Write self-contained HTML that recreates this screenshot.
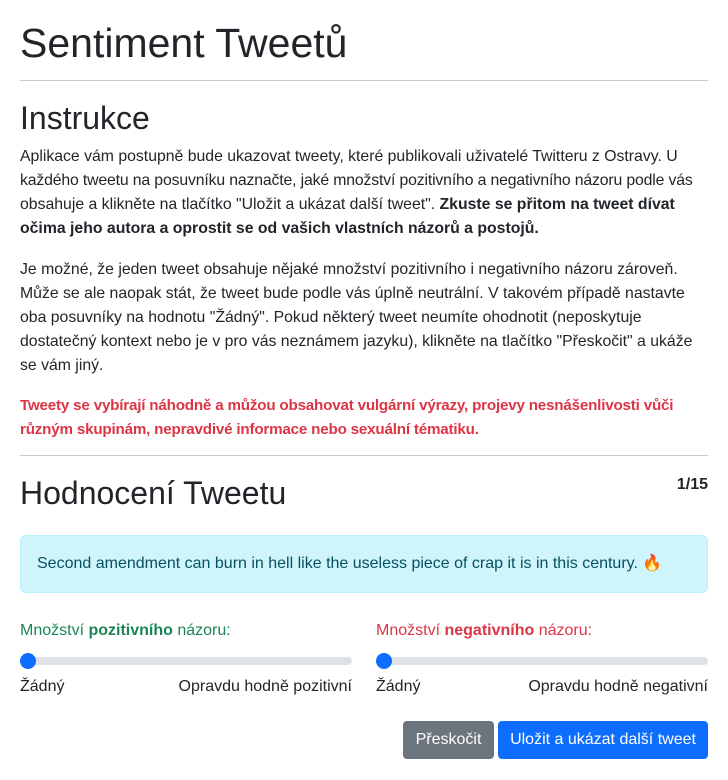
<!DOCTYPE html>
<html><head><meta charset="utf-8"><style>
body{margin:0;background:#fff;font-family:"Liberation Sans",sans-serif;color:#212529;font-size:16px;line-height:24px;}
.c{position:relative;width:728px;height:780px;overflow:hidden}
.a{position:absolute;white-space:nowrap}
h1,h2{margin:0;font-weight:400}
hr{position:absolute;left:20px;width:688px;margin:0;border:0;border-top:1px solid #c8c8c8}
.p{left:20px}
.t{font-size:15.8px}
.g{color:#198754}.r{color:#dc3545}
.track{position:absolute;height:8px;background:#dee2e6;border-radius:4px;width:332px}
.th{position:absolute;width:16px;height:16px;border-radius:50%;background:#0d6efd;top:-4px;left:0}
.btn{position:absolute;height:38px;line-height:38px;color:#fff;border-radius:4px;text-align:center;font-size:16px}
</style></head><body><div class="c">
<h1 class="a p" style="top:18px;font-size:41px;line-height:50px">Sentiment Tweetů</h1>
<hr style="top:80px">
<h2 class="a p" style="top:98px;font-size:32px;line-height:40px">Instrukce</h2>
<div class="a p t" style="top:145px">Aplikace vám postupně bude ukazovat tweety, které publikovali uživatelé Twitteru z Ostravy. U<br><span style="letter-spacing:-0.15px">každého tweetu na posuvníku naznačte, jaké množství pozitivního a negativního názoru podle vás</span><br>obsahuje a klikněte na tlačítko "Uložit a ukázat další tweet". <b>Zkuste se přitom na tweet dívat</b><br><b>očima jeho autora a oprostit se od vašich vlastních názorů a postojů.</b></div>
<div class="a p t" style="top:258px">Je možné, že jeden tweet obsahuje nějaké množství pozitivního i negativního názoru zároveň.<br>Může se ale naopak stát, že tweet bude podle vás úplně neutrální. V takovém případě nastavte<br>oba posuvníky na hodnotu "Žádný". Pokud některý tweet neumíte ohodnotit (neposkytuje<br>dostatečný kontext nebo je v pro vás neznámem jazyku), klikněte na tlačítko "Přeskočit" a ukáže<br>se vám jiný.</div>
<div class="a p r" style="top:394px;font-weight:bold;font-size:15.2px;letter-spacing:-0.2px">Tweety se vybírají náhodně a můžou obsahovat vulgární výrazy, projevy nesnášenlivosti vůči<br>různým skupinám, nepravdivé informace nebo sexuální tématiku.</div>
<hr style="top:455px">
<h2 class="a p" style="top:473px;font-size:32px;line-height:40px">Hodnocení Tweetu</h2>
<div class="a" style="top:473px;right:20px;font-weight:bold">1/15</div>
<div class="a" style="left:20px;top:535px;width:686px;height:56px;background:#cff4fc;border:1px solid #b6effb;border-radius:6px;color:#055160;line-height:56px;box-sizing:content-box"><span style="padding-left:16px">Second amendment can burn in hell like the useless piece of crap it is in this century. 🔥</span></div>
<div class="a g" style="left:20px;top:619px">Množství <b>pozitivního</b> názoru:</div>
<div class="a r" style="left:376px;top:619px">Množství <b>negativního</b> názoru:</div>
<div class="track" style="left:20px;top:657px"><div class="th"></div></div>
<div class="track" style="left:376px;top:657px"><div class="th"></div></div>
<div class="a" style="left:20px;top:675px">Žádný</div>
<div class="a" style="right:376px;top:675px">Opravdu hodně pozitivní</div>
<div class="a" style="left:376px;top:675px">Žádný</div>
<div class="a" style="right:20px;top:675px">Opravdu hodně negativní</div>
<div class="btn" style="left:403px;top:721px;width:91px;background:#6c757d">Přeskočit</div>
<div class="btn" style="left:498px;top:721px;width:210px;background:#0d6efd">Uložit a ukázat další tweet</div>
</div></body></html>
